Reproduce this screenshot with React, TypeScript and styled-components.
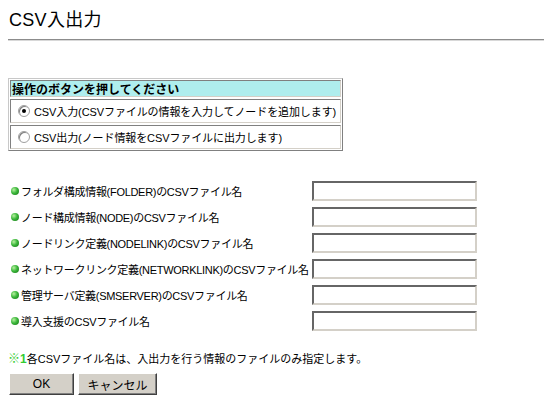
import React from "react";
import styled, { createGlobalStyle } from "styled-components";

const Global = createGlobalStyle`
  html, body { margin: 0; padding: 0; background: #fff; }
  body {
    padding: 8px;
    font-family: "Liberation Sans", "Noto Sans CJK JP", sans-serif;
    font-size: 11px;
    color: #000;
  }
`;

const Page = styled.div`
  display: flex;
  flex-direction: column;
  width: 536px;
`;

const Title = styled.h1`
  margin: 0;
  height: 24px;
  line-height: 24px;
  font-size: 18px;
  font-weight: normal;
  letter-spacing: 0.3px;
  padding-left: 1px;
`;

const Rule = styled.div`
  margin: 7px -8px 0 0;
  border-top: 1px solid #8c8c8c;
  border-bottom: 1px solid #d8d8d8;
`;

const ChoiceBox = styled.div`
  margin-top: 37px;
  width: 331px;
  border: 1px solid;
  border-color: #c8c8c8 #808080 #808080 #c8c8c8;
  padding: 1px;
  display: flex;
  flex-direction: column;
  gap: 2px;
`;

const Cell = styled.div<{ $header?: boolean }>`
  border: 1px solid;
  border-color: #808080 #d4d0c8 #d4d0c8 #808080;
  background: ${(p) => (p.$header ? "#afeeee" : "#fff")};
  height: ${(p) => (p.$header ? "15px" : "22px")};
  display: flex;
  align-items: center;
  padding-left: ${(p) => (p.$header ? "1px" : "7px")};
  font-weight: ${(p) => (p.$header ? "bold" : "normal")};
  font-size: ${(p) => (p.$header ? "12px" : "11px")};
  letter-spacing: ${(p) => (p.$header ? "0" : "-0.1px")};
  white-space: nowrap;
  gap: 4px;
`;

const Radio = styled.span<{ $checked?: boolean }>`
  display: inline-block;
  box-sizing: border-box;
  width: 12px;
  height: 12px;
  border-radius: 50%;
  border: 1px solid #a0a0a0;
  background: #fff;
  box-shadow: inset 1px 1px 0 #808080;
  position: relative;
  flex: none;
  &::after {
    content: "";
    display: ${(p) => (p.$checked ? "block" : "none")};
    position: absolute;
    left: 3px;
    top: 3px;
    width: 4px;
    height: 4px;
    border-radius: 50%;
    background: #000;
  }
`;

const Fields = styled.div`
  margin-top: 30px;
  display: grid;
  grid-template-columns: 304px 165px;
  row-gap: 6px;
`;

const Label = styled.div`
  display: flex;
  align-items: center;
  gap: 1px;
  padding-left: 3px;
  white-space: nowrap;
  height: 20px;
  letter-spacing: -0.3px;
`;

const Bullet = styled.span`
  display: inline-block;
  width: 8px;
  height: 8px;
  border-radius: 50%;
  background: radial-gradient(circle at 35% 35%, #b8f0a0 0%, #3cb83c 45%, #117011 100%);
  flex: none;
  margin-right: 1px;
`;

const TextInput = styled.input`
  box-sizing: border-box;
  width: 165px;
  height: 20px;
  margin: 0;
  padding: 1px 2px;
  border: 2px solid;
  border-color: #666 #d4d0c8 #d4d0c8 #666;
  background: #fff;
  font: inherit;
  outline: none;
`;

const Note = styled.div`
  margin-top: 20px;
  height: 16px;
  line-height: 16px;
  white-space: nowrap;
  font-size: 11px;
`;

const Mark = styled.span`
  color: #33cc33;
  font-weight: bold;
  font-size: 12px;
`;

const Buttons = styled.div`
  margin-top: 6px;
  display: flex;
  gap: 4px;
  padding-left: 1px;
`;

const Button = styled.button<{ $w: number }>`
  box-sizing: border-box;
  width: ${(p) => p.$w}px;
  height: 22px;
  margin: 0;
  padding: 0;
  background: #d4d0c8;
  border: 1px solid;
  border-color: #fff #404040 #404040 #fff;
  box-shadow: inset -1px -1px 0 #808080;
  font: inherit;
  font-size: 12px;
  color: #000;
`;

const fields = [
  "フォルダ構成情報(FOLDER)のCSVファイル名",
  "ノード構成情報(NODE)のCSVファイル名",
  "ノードリンク定義(NODELINK)のCSVファイル名",
  "ネットワークリンク定義(NETWORKLINK)のCSVファイル名",
  "管理サーバ定義(SMSERVER)のCSVファイル名",
  "導入支援のCSVファイル名",
];

export default function App() {
  return (
    <Page>
      <Global />
      <Title>CSV入出力</Title>
      <Rule />
      <ChoiceBox>
        <Cell $header>操作のボタンを押してください</Cell>
        <Cell>
          <Radio $checked />
          CSV入力(CSVファイルの情報を入力してノードを追加します)
        </Cell>
        <Cell>
          <Radio />
          CSV出力(ノード情報をCSVファイルに出力します)
        </Cell>
      </ChoiceBox>
      <Fields>
        {fields.map((f) => (
          <React.Fragment key={f}>
            <Label>
              <Bullet />
              {f}
            </Label>
            <TextInput type="text" />
          </React.Fragment>
        ))}
      </Fields>
      <Note>
        <Mark>※1</Mark>各CSVファイル名は、入出力を行う情報のファイルのみ指定します。
      </Note>
      <Buttons>
        <Button $w={65}>OK</Button>
        <Button $w={79}>キャンセル</Button>
      </Buttons>
    </Page>
  );
}
